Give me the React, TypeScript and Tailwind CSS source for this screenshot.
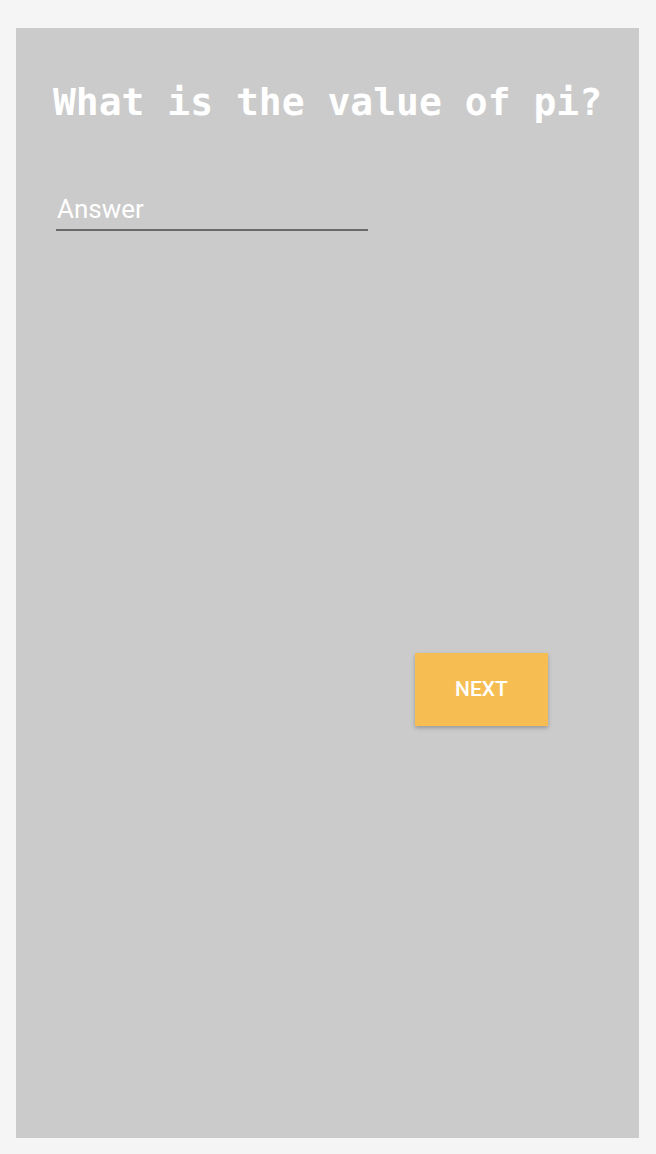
const App = () => {
  return (
    <div className="min-h-[1154px] w-full bg-[#f5f5f5] pt-[28px] pb-[16px] pl-[16px] pr-[17px]">
      <div className="h-[1110px] w-full bg-[#cbcbcb] flex flex-col">
        <h1 className="mt-[50px] text-center text-[38px] leading-[48px] font-bold text-white font-['DejaVu_Sans_Mono',monospace]">
          What is the value of pi?
        </h1>

        <div className="mt-[67px] ml-[40px] w-[312px]">
          <input
            placeholder="Answer"
            className="w-full bg-transparent border-b-2 border-[#6a6a6a] pb-[4px] pl-[1px] text-[26px] leading-[32px] text-white placeholder:text-white font-['Roboto',sans-serif] focus:outline-none"
          />
        </div>

        <div className="mt-[422px] flex justify-end pr-[91px]">
          <button className="w-[133px] h-[73px] bg-[#f6be52] text-white text-[21px] font-medium font-['Roboto',sans-serif] shadow-[0_2px_4px_rgba(0,0,0,0.25)]">
            NEXT
          </button>
        </div>
      </div>
    </div>
  )
}

export default App
